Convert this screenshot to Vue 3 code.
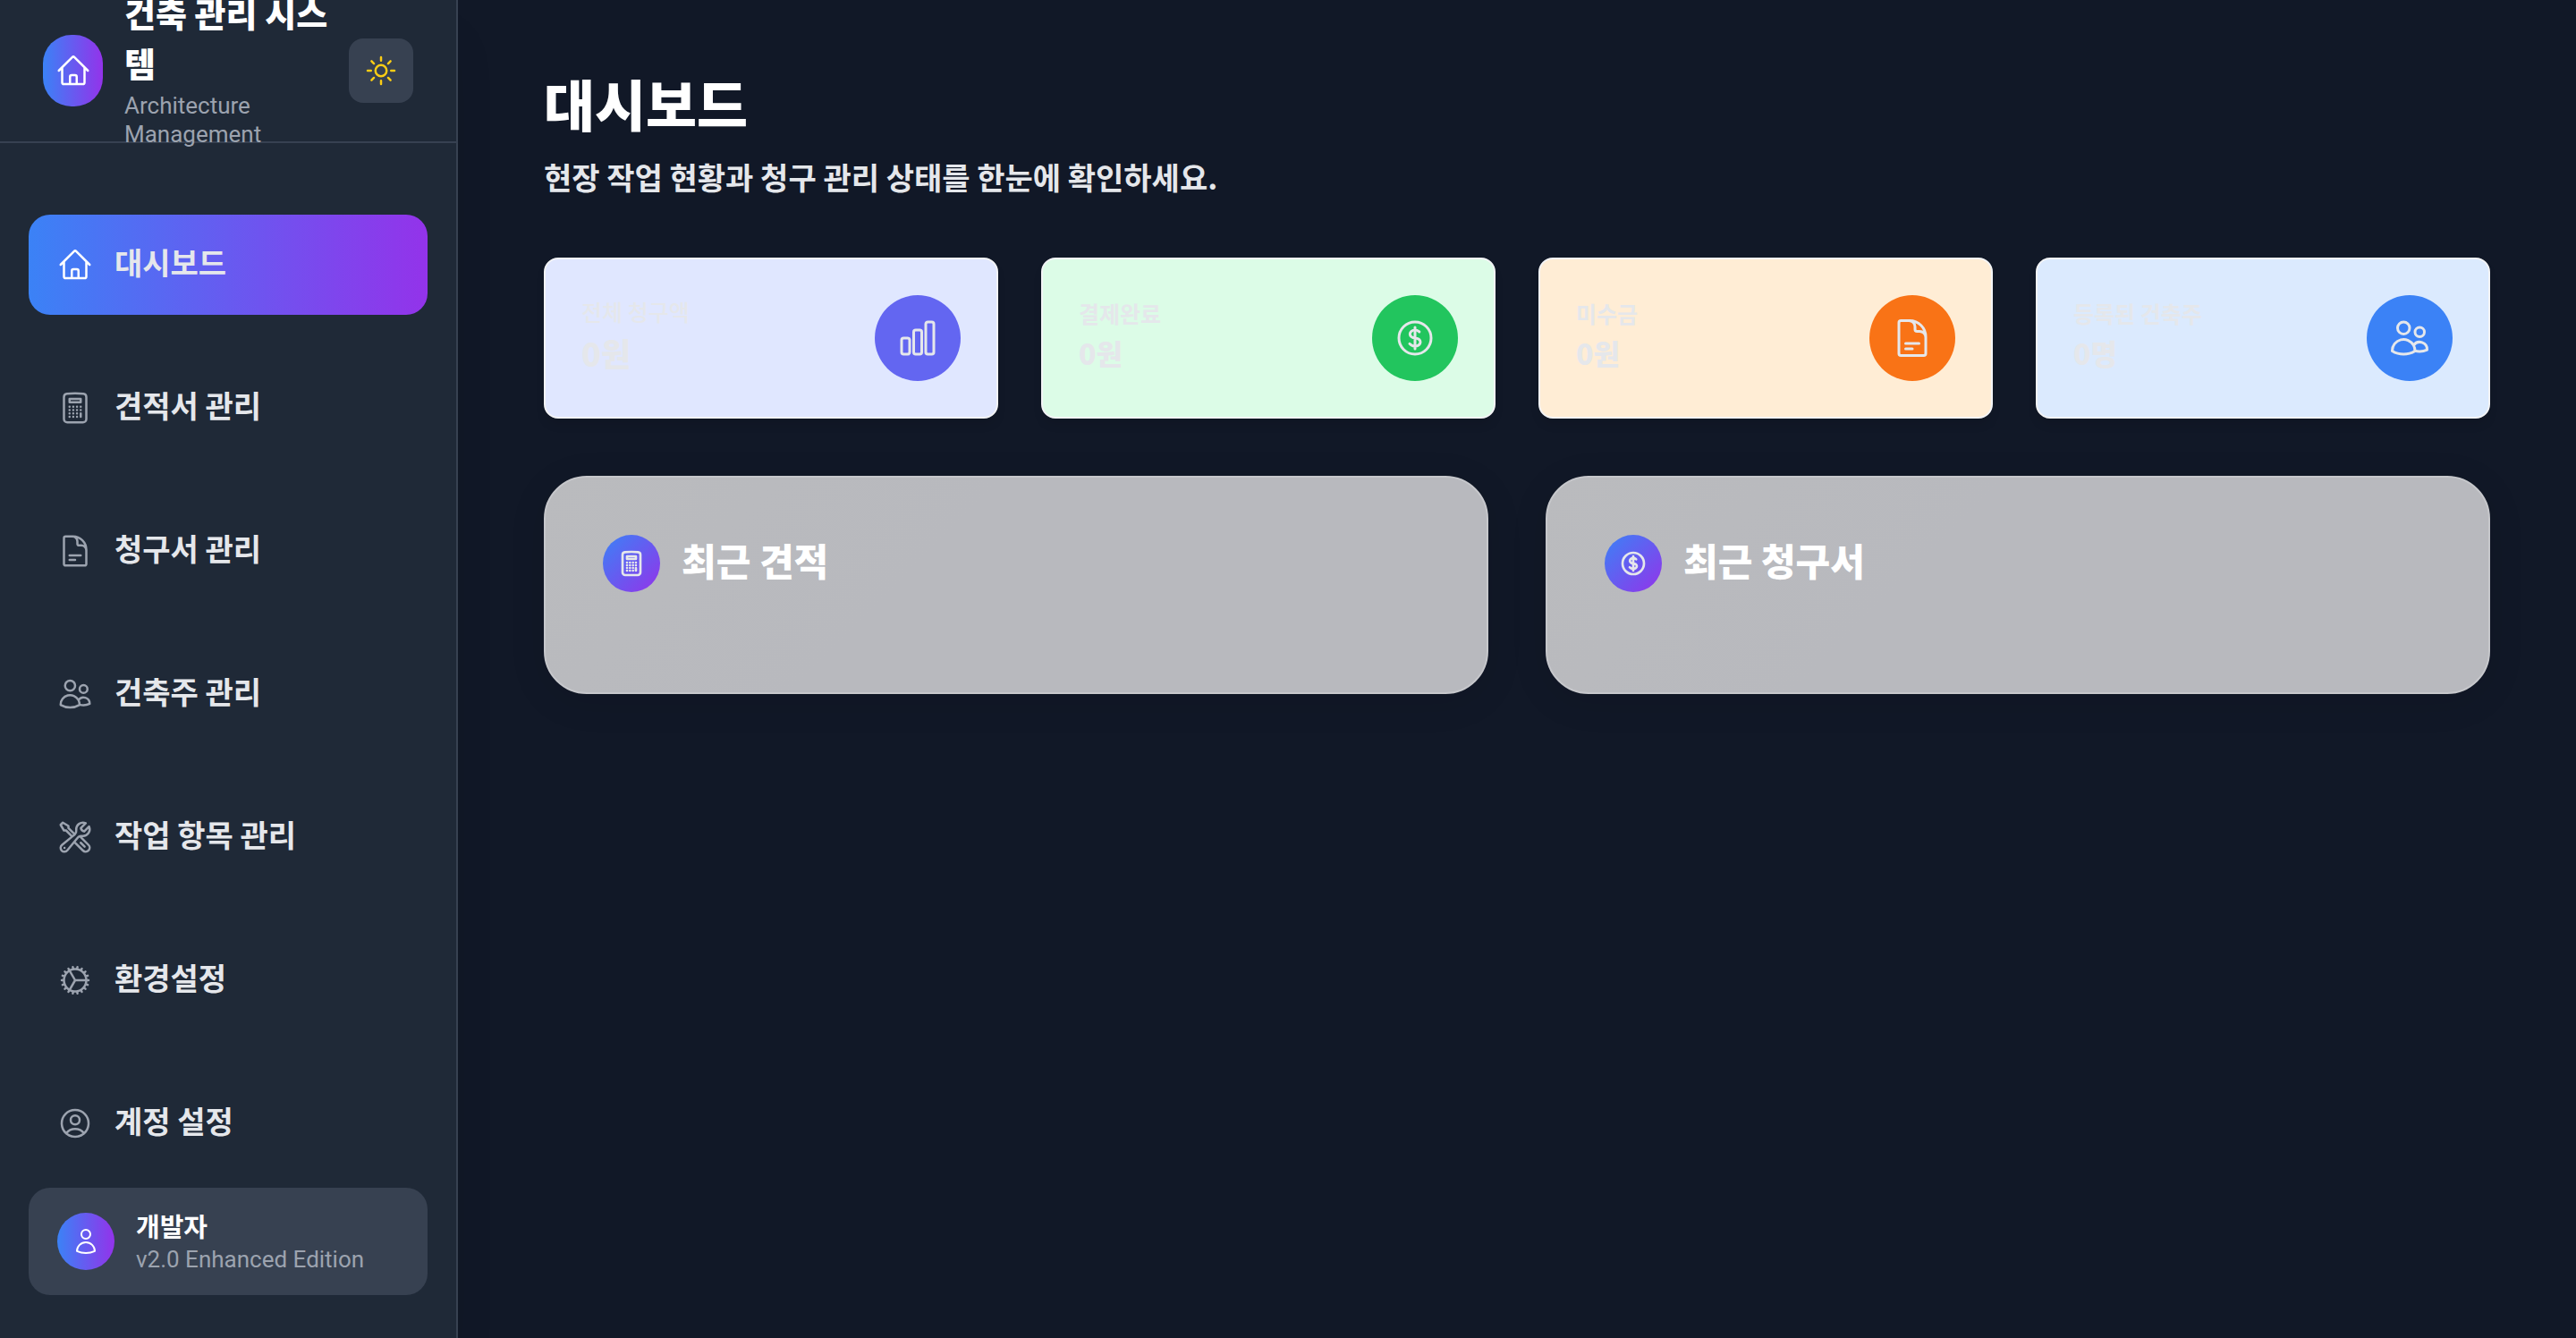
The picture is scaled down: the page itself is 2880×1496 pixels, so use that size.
<script setup>
import { ref } from 'vue'

const icons = {
  home: 'm2.25 12 8.954-8.955c.44-.439 1.152-.439 1.591 0L21.75 12M4.5 9.75v10.125c0 .621.504 1.125 1.125 1.125H9.75v-4.875c0-.621.504-1.125 1.125-1.125h2.25c.621 0 1.125.504 1.125 1.125V21h4.125c.621 0 1.125-.504 1.125-1.125V9.75M8.25 21h8.25',
  sun: 'M12 3v2.25m6.364.386-1.591 1.591M21 12h-2.25m-.386 6.364-1.591-1.591M12 18.75V21m-4.773-4.227-1.591 1.591M5.25 12H3m4.227-4.773L5.636 5.636M15.75 12a3.75 3.75 0 1 1-7.5 0 3.75 3.75 0 0 1 7.5 0Z',
  calculator: 'M15.75 15.75V18m-7.5-6.75h.008v.008H8.25v-.008Zm0 2.25h.008v.008H8.25V13.5Zm0 2.25h.008v.008H8.25v-.008Zm0 2.25h.008v.008H8.25V18Zm2.498-6.75h.007v.008h-.007v-.008Zm0 2.25h.007v.008h-.007V13.5Zm0 2.25h.007v.008h-.007v-.008Zm0 2.25h.007v.008h-.007V18Zm2.504-6.75h.008v.008h-.008v-.008Zm0 2.25h.008v.008h-.008V13.5Zm0 2.25h.008v.008h-.008v-.008Zm0 2.25h.008v.008h-.008V18Zm2.498-6.75h.008v.008h-.008v-.008Zm0 2.25h.008v.008h-.008V13.5ZM8.25 6h7.5v2.25h-7.5V6ZM12 2.25c-1.892 0-3.758.11-5.593.322C5.307 2.7 4.5 3.65 4.5 4.757V19.5a2.25 2.25 0 0 0 2.25 2.25h10.5a2.25 2.25 0 0 0 2.25-2.25V4.757c0-1.108-.806-2.057-1.907-2.185A48.507 48.507 0 0 0 12 2.25Z',
  document: 'M19.5 14.25v-2.625a3.375 3.375 0 0 0-3.375-3.375h-1.5A1.125 1.125 0 0 1 13.5 7.125v-1.5a3.375 3.375 0 0 0-3.375-3.375H8.25m0 12.75h7.5m-7.5 3H12M10.5 2.25H5.625c-.621 0-1.125.504-1.125 1.125v17.25c0 .621.504 1.125 1.125 1.125h12.75c.621 0 1.125-.504 1.125-1.125V11.25a9 9 0 0 0-9-9Z',
  users: 'M15 19.128a9.38 9.38 0 0 0 2.625.372 9.337 9.337 0 0 0 4.121-.952 4.125 4.125 0 0 0-7.533-2.493M15 19.128v-.003c0-1.113-.285-2.16-.786-3.07M15 19.128v.106A12.318 12.318 0 0 1 8.624 21c-2.331 0-4.512-.645-6.374-1.766l-.001-.109a6.375 6.375 0 0 1 11.964-3.07M12 6.375a3.375 3.375 0 1 1-6.75 0 3.375 3.375 0 0 1 6.75 0Zm8.25 2.25a2.625 2.625 0 1 1-5.25 0 2.625 2.625 0 0 1 5.25 0Z',
  tools: 'M11.42 15.17 17.25 21A2.652 2.652 0 0 0 21 17.25l-5.877-5.877M11.42 15.17l2.496-3.03c.317-.384.74-.626 1.208-.766M11.42 15.17l-4.655 5.653a2.548 2.548 0 1 1-3.586-3.586l6.837-5.63m5.108-.233c.55-.164 1.163-.188 1.743-.14a4.5 4.5 0 0 0 4.486-6.336l-3.276 3.277a3.004 3.004 0 0 1-2.25-2.25l3.276-3.276a4.5 4.5 0 0 0-6.336 4.486c.091 1.076-.071 2.264-.904 2.95l-.102.085m-1.745 1.437L5.909 7.5H4.5L2.25 3.75l1.5-1.5L7.5 4.5v1.409l4.26 4.26m-1.745 1.437 1.745-1.437m6.615 8.206L15.75 15.75M4.867 19.125h.008v.008h-.008v-.008Z',
  cog: 'M4.5 12a7.5 7.5 0 0 0 15 0m-15 0a7.5 7.5 0 1 1 15 0m-15 0H3m16.5 0H21m-1.5 0H12m-8.457 3.077 1.41-.513m14.095-5.13 1.41-.513M5.106 17.785l1.15-.964m11.49-9.642 1.149-.964M7.501 19.795l.75-1.3m7.5-12.99.75-1.3m-6.063 16.658.26-1.477m2.605-14.772.26-1.477m0 17.726-.26-1.477M10.698 4.614l-.26-1.477M16.5 19.794l-.75-1.299M7.5 4.205 12 12m6.894 5.785-1.149-.964M6.256 7.178l-1.15-.964m15.352 8.864-1.41-.513M4.954 9.435l-1.41-.514M12.002 12l-3.75 6.495',
  account: 'M17.982 18.725A7.488 7.488 0 0 0 12 15.75a7.488 7.488 0 0 0-5.982 2.975m11.963 0a9 9 0 1 0-11.963 0m11.963 0A8.966 8.966 0 0 1 12 21a8.966 8.966 0 0 1-5.982-2.275M15 9.75a3 3 0 1 1-6 0 3 3 0 0 1 6 0Z',
  user: 'M15.75 6a3.75 3.75 0 1 1-7.5 0 3.75 3.75 0 0 1 7.5 0ZM4.501 20.118a7.5 7.5 0 0 1 14.998 0A17.933 17.933 0 0 1 12 21.75c-2.676 0-5.216-.584-7.499-1.632Z',
  chart: 'M3 13.125C3 12.504 3.504 12 4.125 12h2.25c.621 0 1.125.504 1.125 1.125v6.75C7.5 20.496 6.996 21 6.375 21h-2.25A1.125 1.125 0 0 1 3 19.875v-6.75ZM9.75 8.625c0-.621.504-1.125 1.125-1.125h2.25c.621 0 1.125.504 1.125 1.125v11.25c0 .621-.504 1.125-1.125 1.125h-2.25a1.125 1.125 0 0 1-1.125-1.125V8.625ZM16.5 4.125c0-.621.504-1.125 1.125-1.125h2.25C20.496 3 21 3.504 21 4.125v15.75c0 .621-.504 1.125-1.125 1.125h-2.25a1.125 1.125 0 0 1-1.125-1.125V4.125Z',
  dollar: 'M12 6v12m-3-2.818.879.659c1.171.879 3.07.879 4.242 0 1.172-.879 1.172-2.303 0-3.182C13.536 12.219 12.768 12 12 12c-.725 0-1.45-.22-2.003-.659-1.106-.879-1.106-2.303 0-3.182s2.9-.879 4.006 0l.415.33M21 12a9 9 0 1 1-18 0 9 9 0 0 1 18 0Z'
}

const active = ref('dashboard')

const menu = [
  { id: 'dashboard', label: '대시보드', icon: 'home' },
  { id: 'estimates', label: '견적서 관리', icon: 'calculator' },
  { id: 'invoices', label: '청구서 관리', icon: 'document' },
  { id: 'clients', label: '건축주 관리', icon: 'users' },
  { id: 'work-items', label: '작업 항목 관리', icon: 'tools' },
  { id: 'settings', label: '환경설정', icon: 'cog' },
  { id: 'account', label: '계정 설정', icon: 'account' }
]

const stats = [
  { label: '전체 청구액', value: '0원', icon: 'chart', tone: 'indigo', large: true },
  { label: '결제완료', value: '0원', icon: 'dollar', tone: 'green' },
  { label: '미수금', value: '0원', icon: 'document', tone: 'orange' },
  { label: '등록된 건축주', value: '0명', icon: 'users', tone: 'blue' }
]

const panels = [
  { title: '최근 견적', icon: 'calculator' },
  { title: '최근 청구서', icon: 'dollar' }
]
</script>

<template>
  <div class="layout">
    <aside class="sidebar">
      <header class="brand">
        <div class="brand-logo">
          <svg class="icon" viewBox="0 0 24 24" aria-hidden="true"><path :d="icons.home" /></svg>
        </div>
        <div class="brand-text">
          <div class="brand-name">건축 관리 시스템</div>
          <div class="brand-sub">Architecture Management</div>
        </div>
        <button class="theme-toggle" type="button" aria-label="라이트 모드">
          <svg class="icon" viewBox="0 0 24 24" aria-hidden="true"><path :d="icons.sun" /></svg>
        </button>
      </header>

      <nav class="menu">
        <a
          v-for="item in menu"
          :key="item.id"
          class="menu-item"
          :class="{ active: active === item.id }"
          :href="'#' + item.id"
          @click.prevent="active = item.id"
        >
          <svg class="icon" viewBox="0 0 24 24" aria-hidden="true"><path :d="icons[item.icon]" /></svg>
          <span class="menu-label">{{ item.label }}</span>
        </a>
      </nav>

      <div class="profile">
        <div class="avatar">
          <svg class="icon small" viewBox="0 0 24 24" aria-hidden="true"><path :d="icons.user" /></svg>
        </div>
        <div class="profile-text">
          <div class="profile-name">개발자</div>
          <div class="profile-version">v2.0 Enhanced Edition</div>
        </div>
      </div>
    </aside>

    <main class="content">
      <h1 class="title">대시보드</h1>
      <p class="subtitle">현장 작업 현황과 청구 관리 상태를 한눈에 확인하세요.</p>

      <section class="stats">
        <article v-for="stat in stats" :key="stat.label" class="stat" :class="[stat.tone, { large: stat.large }]">
          <div class="stat-text">
            <div class="stat-label">{{ stat.label }}</div>
            <div class="stat-value">{{ stat.value }}</div>
          </div>
          <div class="stat-icon">
            <svg class="icon big" viewBox="0 0 24 24" aria-hidden="true"><path :d="icons[stat.icon]" /></svg>
          </div>
        </article>
      </section>

      <section class="panels">
        <article v-for="panel in panels" :key="panel.title" class="panel">
          <div class="panel-head">
            <div class="panel-icon">
              <svg class="icon small" viewBox="0 0 24 24" aria-hidden="true"><path :d="icons[panel.icon]" /></svg>
            </div>
            <h2 class="panel-title">{{ panel.title }}</h2>
          </div>
        </article>
      </section>
    </main>
  </div>
</template>

<style>
body {
  margin: 0;
  background: #111827;
}
</style>

<style scoped>
.layout {
  display: flex;
  min-height: 100vh;
  background: #111827;
  color: #e5e7eb;
  font-family: Roboto, "Noto Sans CJK KR", sans-serif;
}

.layout * {
  box-sizing: border-box;
}

.icon {
  display: block;
  flex: none;
  width: 40px;
  height: 40px;
  fill: none;
  stroke: currentColor;
  stroke-width: 1.5;
  stroke-linecap: round;
  stroke-linejoin: round;
}

.icon.small {
  width: 32px;
  height: 32px;
}

.icon.big {
  width: 48px;
  height: 48px;
}

.sidebar {
  position: sticky;
  top: 0;
  z-index: 1;
  display: flex;
  flex-direction: column;
  flex: none;
  box-sizing: border-box;
  width: 512px;
  height: 100vh;
  padding-bottom: 48px;
  border-right: 2px solid #374151;
  background: #1f2937;
  box-shadow: 0 40px 50px -10px rgba(0, 0, 0, 0.1);
}

.brand {
  display: flex;
  align-items: center;
  flex: none;
  height: 160px;
  padding: 0 48px;
  border-bottom: 2px solid #374151;
}

.brand-logo {
  display: grid;
  place-items: center;
  flex: none;
  width: 67px;
  height: 80px;
  margin-right: 24px;
  border-radius: 32px;
  background: linear-gradient(to right, #3b82f6, #9333ea);
  color: #fff;
}

.brand-text {
  flex: 1;
  min-width: 0;
  padding-bottom: 6px;
}

.brand-name {
  padding-bottom: 4px;
  color: #fff;
  font-family: "Noto Sans CJK KR", sans-serif;
  font-size: 38px;
  font-weight: 900;
  line-height: 56px;
}

.brand-sub {
  color: #9ca3af;
  font-size: 26px;
  line-height: 32px;
}

.theme-toggle {
  display: grid;
  place-items: center;
  flex: none;
  width: 72px;
  height: 72px;
  padding: 0;
  border: 0;
  border-radius: 16px;
  background: #374151;
  color: #facc15;
  cursor: pointer;
}

.menu {
  display: flex;
  flex-direction: column;
  gap: 48px;
  padding: 80px 32px 0;
}

.menu-item {
  display: flex;
  align-items: center;
  gap: 24px;
  height: 112px;
  padding: 0 32px;
  border-radius: 24px;
  color: #9ca3af;
  text-decoration: none;
}

.menu-item.active {
  background: linear-gradient(to right, #3b82f6, #9333ea);
  color: #fff;
}

.menu-label {
  padding-bottom: 6px;
  color: #e5e7eb;
  font-family: "Noto Sans CJK KR", sans-serif;
  font-size: 34px;
  font-weight: 700;
  line-height: 56px;
}

.profile {
  display: flex;
  align-items: center;
  gap: 24px;
  height: 120px;
  margin: auto 32px 0;
  padding: 0 32px;
  border-radius: 24px;
  background: #374151;
}

.avatar {
  display: grid;
  place-items: center;
  flex: none;
  width: 64px;
  height: 64px;
  border-radius: 50%;
  background: linear-gradient(to right, #3b82f6, #9333ea);
  color: #fff;
}

.profile-text {
  padding-bottom: 2px;
}

.profile-name {
  padding-bottom: 2px;
  color: #fff;
  font-family: "Noto Sans CJK KR", sans-serif;
  font-size: 29px;
  font-weight: 700;
  line-height: 40px;
}

.profile-version {
  color: #9ca3af;
  font-size: 26px;
  line-height: 32px;
}

.content {
  flex: 1;
  min-width: 0;
  padding: 68px 96px 96px;
  font-family: "Noto Sans CJK KR", sans-serif;
}

.title {
  margin: 0 0 8px;
  color: #fff;
  font-size: 62px;
  font-weight: 900;
  line-height: 94px;
}

.subtitle {
  margin: 0 0 62px;
  font-size: 34px;
  font-weight: 700;
  line-height: 56px;
}

.stats {
  display: grid;
  grid-template-columns: repeat(4, 1fr);
  gap: 48px;
  margin-bottom: 64px;
}

.stat {
  display: flex;
  align-items: center;
  justify-content: space-between;
  height: 180px;
  padding: 0 40px;
  border: 2px solid #f3f4f6;
  border-radius: 16px;
  box-shadow: 0 8px 12px -2px rgba(0, 0, 0, 0.1);
}

.stat-text {
  padding-bottom: 8px;
}

.stat-label {
  font-size: 25px;
  font-weight: 700;
  line-height: 40px;
}

.stat-value {
  font-size: 32px;
  font-weight: 900;
  line-height: 48px;
}

.large .stat-label {
  font-weight: 500;
}

.large .stat-value {
  font-size: 36px;
  line-height: 52px;
}

.stat-icon {
  display: grid;
  place-items: center;
  width: 96px;
  height: 96px;
  border-radius: 50%;
}

.indigo { background: #e0e7ff; }
.indigo .stat-icon { background: #6366f1; }
.green { background: #dcfce7; }
.green .stat-icon { background: #22c55e; }
.orange { background: #ffedd5; }
.orange .stat-icon { background: #f97316; }
.blue { background: #dbeafe; }
.blue .stat-icon { background: #3b82f6; }

.panels {
  display: grid;
  grid-template-columns: repeat(2, 1fr);
  gap: 64px;
}

.panel {
  padding: 64px 64px 112px;
  border: 2px solid #c6c7cb;
  border-radius: 48px;
  background: linear-gradient(135deg, #babbbe, #b8b9be 40%);
  box-shadow: 0 8px 40px rgba(0, 0, 0, 0.1);
}

.panel-head {
  display: flex;
  align-items: center;
  gap: 24px;
}

.panel-icon {
  display: grid;
  place-items: center;
  width: 64px;
  height: 64px;
  border-radius: 50%;
  background: linear-gradient(135deg, #3b82f6, #9333ea);
}

.panel-icon .icon {
  stroke-width: 2;
}

.panel-title {
  margin: 0;
  padding-bottom: 8px;
  color: #fff;
  font-size: 42px;
  font-weight: 900;
  line-height: 56px;
}
</style>
